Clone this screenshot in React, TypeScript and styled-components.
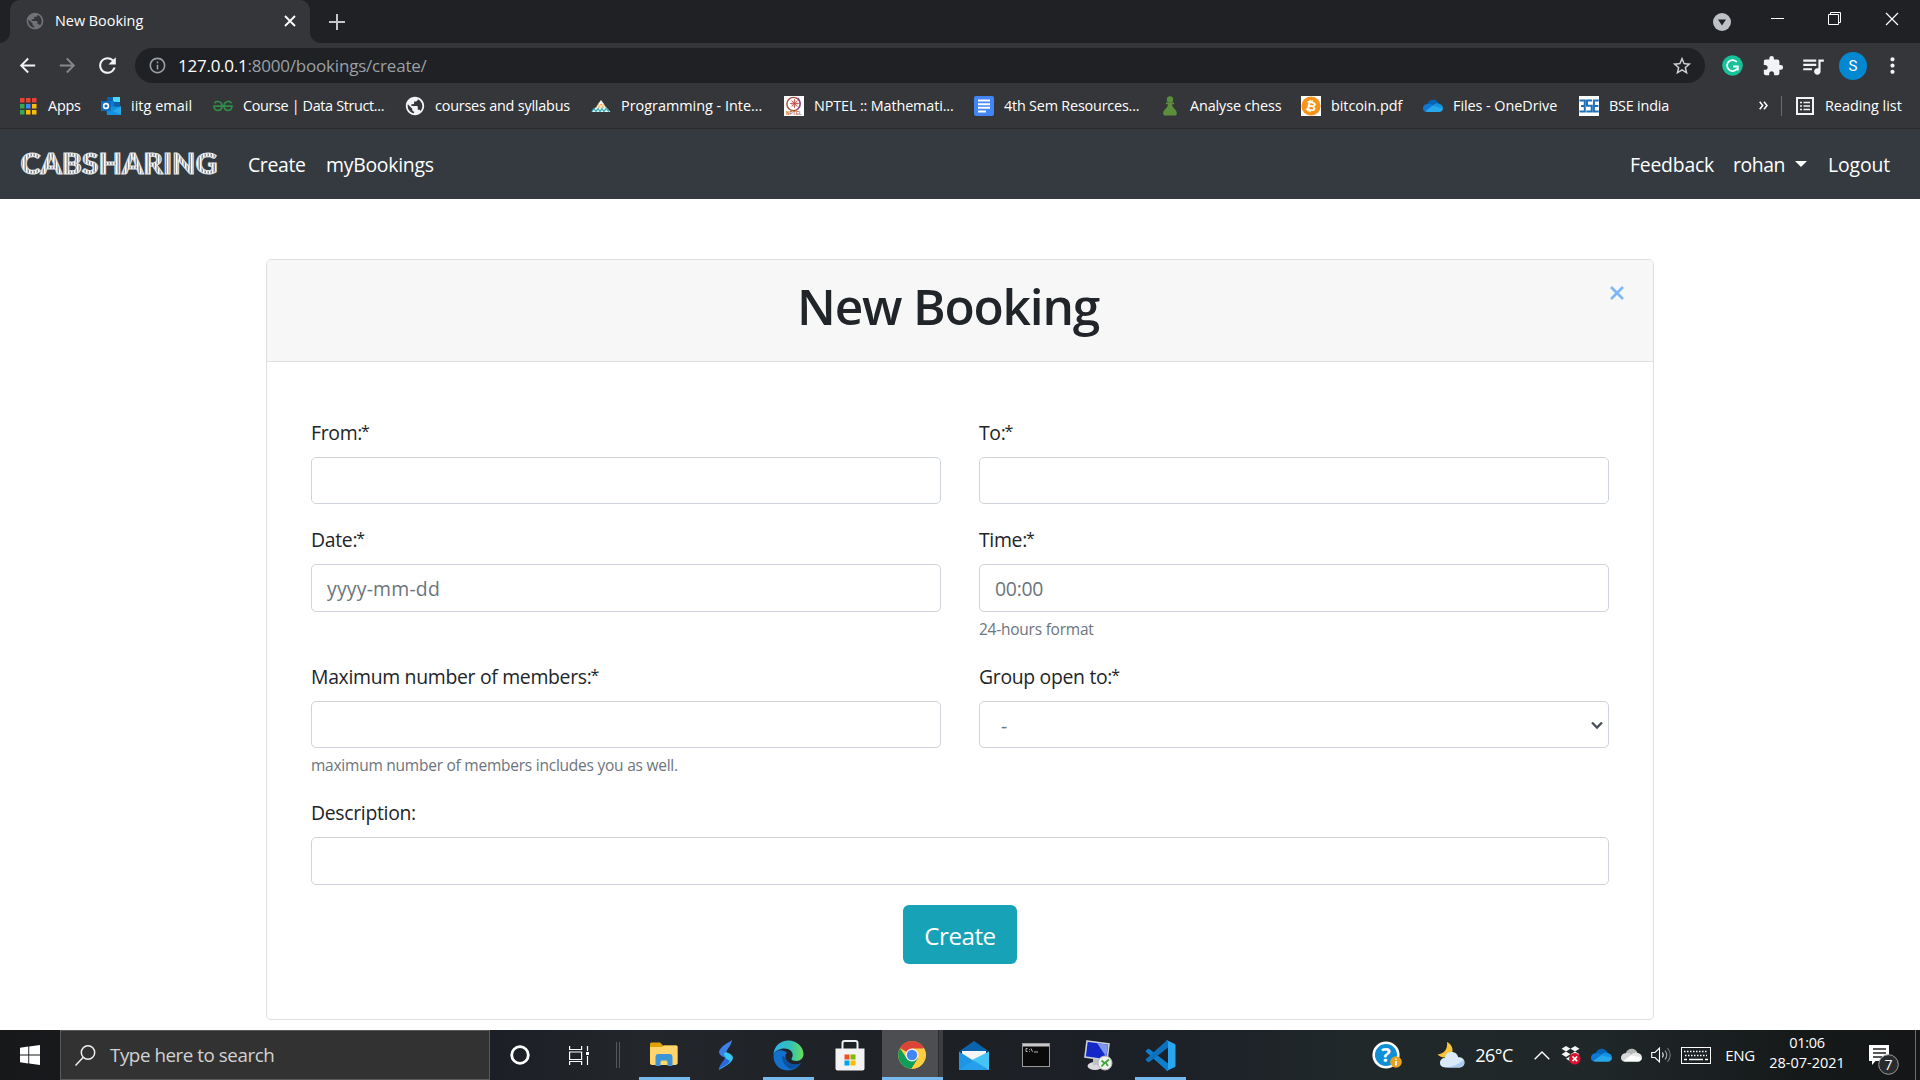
import React from "react";
import styled, { createGlobalStyle, css } from "styled-components";
import {
  MdArrowBack,
  MdArrowForward,
  MdExtension,
  MdInfoOutline,
  MdMoreVert,
  MdPublic,
  MdQueueMusic,
  MdRefresh,
  MdStarBorder,
} from "react-icons/md";

const ui = `"Segoe UI", "Open Sans", "Noto Sans", sans-serif`;

const GlobalStyle = createGlobalStyle`
  * { box-sizing: border-box; }
  body { margin: 0; background: #fff; font-family: ${ui}; overflow: hidden; }
  svg { display: block; flex: none; }
`;

const Screen = styled.div`
  width: 1920px;
  height: 1080px;
  display: flex;
  flex-direction: column;
  overflow: hidden;
`;

/* ---------- generic bits ---------- */

const Text = styled.span<{ $size: number; $track?: number; $color?: string; $w?: number }>`
  font-size: ${(p) => p.$size}px;
  letter-spacing: ${(p) => p.$track ?? 0}px;
  color: ${(p) => p.$color ?? "#fff"};
  ${(p) => p.$w && css`width: ${p.$w}px;`}
  white-space: nowrap;
  line-height: 1.36;
`;

const Cell = styled.div<{ $w: number }>`
  width: ${(p) => p.$w}px;
  flex: none;
  display: flex;
  align-items: center;
  justify-content: center;
`;

const Spacer = styled.div`
  flex: 1;
`;

/* ---------- browser chrome ---------- */

const TabStrip = styled.div`
  height: 43px;
  flex: none;
  display: flex;
  background: #202124;
  padding-left: 10px;
`;

const Tab = styled.div`
  width: 300px;
  display: flex;
  align-items: center;
  padding: 0 14px 2px 15px;
  background: #35363a;
  border-radius: 10px 10px 0 0;
  position: relative;
  &::before,
  &::after {
    content: "";
    position: absolute;
    bottom: 0;
    width: 10px;
    height: 10px;
  }
  &::before {
    left: -10px;
    background: radial-gradient(circle at 0 0, transparent 9.5px, #35363a 10px);
  }
  &::after {
    right: -10px;
    background: radial-gradient(circle at 100% 0, transparent 9.5px, #35363a 10px);
  }
`;

const TabTitle = styled(Text)`
  flex: 1;
  margin-left: 10px;
`;

const NewTab = styled(Cell)`
  height: 43px;
  margin-left: 9px;
`;

const WindowButtons = styled.div`
  display: flex;
  height: 37px;
  align-items: center;
`;

const Toolbar = styled.div`
  height: 45px;
  flex: none;
  display: flex;
  align-items: center;
  background: #35363a;
  padding: 0 0 0 7px;
`;

const AddressBar = styled.div`
  width: 1570px;
  height: 35px;
  margin-left: 8px;
  border-radius: 18px;
  background: #202124;
  display: flex;
  align-items: center;
  padding: 0 12px 0 13px;
`;

const Url = styled.div`
  display: flex;
  flex: 1;
  margin-left: 11px;
`;

const Avatar = styled.div`
  width: 28px;
  height: 28px;
  border-radius: 50%;
  background: #0288d1;
  color: #fff;
  font: 15px/28px Roboto, sans-serif;
  text-align: center;
`;

const BookmarksBar = styled.div`
  height: 41px;
  flex: none;
  display: flex;
  align-items: center;
  background: #35363a;
  border-bottom: 1px solid #29292c;
  padding: 0 0 5px 18px;
`;

const BookmarkItem = styled.div<{ $w: number }>`
  width: ${(p) => p.$w}px;
  flex: none;
  display: flex;
  align-items: center;
  gap: 10px;
`;

const IconSlot = styled.div`
  width: 20px;
  height: 20px;
  display: flex;
  align-items: center;
  justify-content: center;
`;

const Divider = styled.div`
  width: 1px;
  height: 20px;
  background: #6b6c6f;
`;

/* ---------- page ---------- */

const Navbar = styled.nav`
  height: 70px;
  flex: none;
  display: flex;
  align-items: center;
  background: #343a40;
  padding: 2px 30px 0 20px;
`;

const Caret = styled.div`
  margin: 0 21px 3px 12px;
  border: 6px solid transparent;
  border-top-color: #fff;
  border-bottom: 0;
`;

const Page = styled.main`
  height: 831px;
  flex: none;
  display: flex;
  justify-content: center;
  padding-top: 60px;
  background: #fff;
`;

const Card = styled.section`
  width: 1388px;
  height: 761px;
  border: 1px solid #dfdfdf;
  border-radius: 5px;
  background: #fff;
  overflow: hidden;
`;

const CardHeader = styled.header`
  height: 102px;
  display: flex;
  justify-content: space-between;
  background: #f7f7f7;
  border-bottom: 1px solid #dfdfdf;
  padding: 0 29px 0 530px;
`;

const Title = styled.h1`
  margin: 12px 0 0;
  font-size: 49.6px;
  font-weight: 600;
  line-height: 68px;
  letter-spacing: -1.2px;
  color: #212529;
  white-space: nowrap;
`;

const Close = styled.div`
  padding-top: 26px;
`;

const Form = styled.div`
  padding: 57px 44px 0;
`;

const FieldRow = styled.div<{ $h: number }>`
  display: flex;
  gap: 38px;
  height: ${(p) => p.$h}px;
`;

const Field = styled.div`
  flex: 1;
  display: flex;
  flex-direction: column;
`;

const Label = styled.label`
  height: 38px;
  line-height: 28px;
  font-size: 19.4px;
  letter-spacing: -0.31px;
  color: #212529;
`;

const Star = styled.span`
  font-size: 16px;
  line-height: 1;
  vertical-align: 3px;
  margin-left: -1px;
`;

const Control = styled.div<{ $h?: number; $pad?: number }>`
  height: ${(p) => p.$h ?? 48}px;
  display: flex;
  align-items: center;
  justify-content: space-between;
  padding: 2px 5px 0 ${(p) => p.$pad ?? 15}px;
  border: 1px solid #ced4da;
  border-radius: 5px;
  background: #fff;
  font-size: 19.4px;
  color: #6c757d;
`;

const Help = styled.small`
  margin-top: 5px;
  line-height: 24px;
  font-size: 15.5px;
  letter-spacing: -0.24px;
  color: #6c757d;
`;

const Submit = styled.button`
  display: block;
  width: 114px;
  height: 59px;
  margin: 20px auto 0;
  padding: 2px 0 0;
  border: 0;
  border-radius: 6px;
  background: #17a2b8;
  color: #fff;
  font-family: ${ui};
  font-size: 24.2px;
  letter-spacing: -0.5px;
`;

/* ---------- taskbar ---------- */

const Taskbar = styled.footer`
  height: 50px;
  flex: none;
  display: flex;
  align-items: stretch;
  background: linear-gradient(90deg, #17181a 0, #1c2026 500px, #23272b 640px, #1d2024 900px, #1c2027 1150px, #20282a 1350px, #1f2729 1600px, #16191a 1800px, #141617 100%);
`;

const SearchBox = styled.div`
  width: 430px;
  border: 1px solid #5a5a5a;
  background: #323232;
  display: flex;
  align-items: center;
  padding: 1px 0 0 14px;
  gap: 14px;
`;

const Grip = styled.div`
  width: 4px;
  height: 26px;
  margin: 12px 13px 0 8px;
  border: solid #55595c;
  border-width: 0 1px;
`;

const AppButton = styled.div<{ $open?: boolean; $active?: boolean }>`
  width: 62px;
  display: flex;
  align-items: center;
  justify-content: center;
  ${(p) =>
    p.$open &&
    css`
      background: linear-gradient(#76b9ed, #76b9ed) center bottom / 51px 3px no-repeat;
    `}
  ${(p) =>
    p.$active &&
    css`
      background: linear-gradient(#76b9ed, #76b9ed) 1px bottom / 61px 3px no-repeat,
        linear-gradient(90deg, transparent 1px, #4c4e51 1px, #4c4e51 57px, #2c2e31 57px, #2c2e31 58px, #3b3d40 58px);
    `}
`;

const Clock = styled.div`
  width: 84px;
  display: flex;
  flex-direction: column;
  align-items: center;
  padding: 3px 8px 0 0;
`;

const Notifications = styled(Cell)`
  padding-top: 8px;
`;

const ShowDesktop = styled.div`
  width: 5px;
  border-left: 1px solid #6b6d6e;
`;

/* ---------- drawings ---------- */

const Logo = () => (
  <svg width="200" height="40" viewBox="0 0 200 40" overflow="visible">
    <defs>
      <pattern id="logoStripes" width="3" height="4" patternUnits="userSpaceOnUse">
        <rect width="3" height="4" fill="#858b92" />
        <rect width="1.5" height="4" fill="#ffffff" />
      </pattern>
    </defs>
    <text
      x="0.500"
      y="28.800"
      fontFamily="Lato, sans-serif"
      fontWeight="900"
      fontSize="28"
      textLength="197"
      lengthAdjust="spacingAndGlyphs"
      fill="url(#logoStripes)"
      stroke="#dfe1e3"
      strokeWidth="1.100"
    >
      CABSHARING
    </text>
  </svg>
);

const AppsGrid = () => {
  const colors = ["#ea4335", "#ea4335", "#ea4335", "#34a853", "#4285f4", "#fbbc05", "#34a853", "#fbbc05", "#fbbc05"];
  return (
    <svg width="18" height="18">
      {colors.map((c, i) => (
        <rect key={i} x={(i % 3) * 6 + 1} y={Math.floor(i / 3) * 6 + 1} width="4.500" height="4.500" fill={c} />
      ))}
    </svg>
  );
};

const OutlookIcon = () => (
  <svg width="20" height="18" viewBox="0 0 20 18">
    <rect x="6" y="0" width="13" height="11" fill="#0a5fb0" />
    <rect x="12" y="0" width="7" height="5" fill="#50d9ff" />
    <rect x="6" y="4" width="7" height="6" fill="#0f78d4" />
    <path d="M5 9l15 1v8H6z" fill="#1490df" />
    <path d="M20 9v9L12 14z" fill="#28a8ea" />
    <rect x="0" y="4" width="10" height="10" fill="#0f6cbd" />
    <circle cx="5" cy="9" r="2.4" fill="none" stroke="#fff" strokeWidth="1.6" />
  </svg>
);

const GfgIcon = () => (
  <svg width="20" height="12" viewBox="0 0 20 12" fill="none" stroke="#2f8d46" strokeWidth="1.7">
    <path d="M1.5 3.2C2.6 1.6 4 1.3 5.3 1.5c2.3.4 3.7 2.3 3.7 4.6C8.900 8.700 7.400 10.400 5 10.400 2.600 10.400 1.200 8.800 1 6.200H19C18.800 8.800 17.400 10.400 15 10.400c-2.400 0-3.900-1.700-4-4.300 0-2.300 1.400-4.200 3.700-4.600 1.300-.2 2.700.1 3.800 1.700" />
  </svg>
);

const PyramidIcon = () => (
  <svg width="20" height="12" viewBox="0 0 20 12">
    <path d="M10 0l3 4H7z" fill="#f4f1e8" />
    <path d="M7 4h6l2.500 4h-11z" fill="#f2b35e" />
    <path d="M8 4l2 3 2-3M6 8l1.500-3M14 8l-1.500-3" stroke="#fff" strokeWidth=".9" fill="none" />
    <path d="M4.500 7.500h11L19.500 12h-19z" fill="#dff3f1" />
    <path d="M1 11.500l2-3 2 3 2-3 2 3 2-3 2 3 2-3 3 3" stroke="#35a9b5" strokeWidth="1.200" fill="none" />
  </svg>
);

const NptelIcon = () => (
  <svg width="20" height="20" viewBox="0 0 20 20">
    <rect width="20" height="20" fill="#fff" />
    <circle cx="9.500" cy="8" r="6.600" fill="none" stroke="#a8503f" strokeWidth="1.400" />
    <circle cx="10.500" cy="7.500" r="3.500" fill="#f0c6c0" />
    <path d="M10.500 3v9M6 7.500h9M7.500 4.500l6 6M13.500 4.500l-6 6" stroke="#b0413e" strokeWidth=".7" />
    <path d="M14 2c3 3 3 8 0 11" stroke="#8a4a9a" strokeWidth="1.200" fill="none" />
    <text x="2" y="19.300" fontSize="4.800" fontWeight="700" fontFamily="Liberation Sans, sans-serif" fill="#c0712b" textLength="16">NPTEL</text>
  </svg>
);

const DocsIcon = () => (
  <svg width="20" height="20" viewBox="0 0 20 20">
    <rect width="20" height="20" rx="2" fill="#4285f4" />
    <path d="M4 4.500h12M4 8.200h12M4 11.800h12M4 15.500h8" stroke="#fff" strokeWidth="1.900" />
  </svg>
);

const PawnIcon = () => (
  <svg width="20" height="20" viewBox="0 0 20 20" fill="#5b8f3c">
    <circle cx="10" cy="3.400" r="3.200" />
    <path d="M6 6.500h8v1.700h-2c0 4 4.800 5 4.800 9.300 0 1.500-1 2-2 2H5.200c-1 0-2-.5-2-2C3.200 13.200 8 12.200 8 8.200H6z" />
  </svg>
);

const BitcoinIcon = () => (
  <svg width="20" height="20" viewBox="0 0 20 20">
    <rect width="20" height="20" fill="#fff" />
    <circle cx="10" cy="10" r="9.600" fill="#f7931a" />
    <text x="10.200" y="14.600" transform="rotate(12 10 10)" textAnchor="middle" fontFamily="DejaVu Sans, sans-serif" fontWeight="700" fontSize="13" fill="#fff">₿</text>
  </svg>
);

const CloudIcon = ({ gray, w = 20 }: { gray?: boolean; w?: number }) => (
  <svg width={w} height={w * 0.65} viewBox="0 0 20 13">
    <path d="M4.500 5C5.500 1.500 9 0 12 1c2 .7 3 2 3.500 3.500L9 9z" fill={gray ? "#b5b5b5" : "#0364b8"} />
    <path d="M4.500 5c2-.5 3.500 0 5 1l4 3L3.500 13C.500 12.500 0 10.500 0 9.200 0 7 2 5 4.500 5z" fill={gray ? "#d8d8d8" : "#0f78d4"} />
    <path d="M9.500 7c1.500-2.500 4-3 6-2.500C18.500 5 20 7 20 9l-5 3z" fill={gray ? "#e6e6e6" : "#1490df"} />
    <path d="M9.500 6.800L2.500 12.200c.500.500 1.200.8 2 .8H16c2.200 0 4-1.600 4-3.800z" fill={gray ? "#fff" : "#28a8ea"} />
  </svg>
);

const BseIcon = () => (
  <svg width="20" height="20" viewBox="0 0 20 20">
    <rect width="20" height="20" fill="#fff" />
    <path d="M.5 4.500h5.300v4.700L4.500 10l1.300.8v4.700H.5M2 10h3M13 4.500H8v5.300h4.700v5.700H7.300M19.800 4.500H14.900v11h4.900M14.900 10h4.500" fill="none" stroke="#1f72b8" strokeWidth="2" />
  </svg>
);

const ListIcon = () => (
  <svg width="18" height="18" viewBox="0 0 18 18" fill="none" stroke="#f1f3f4">
    <rect x="1" y="1" width="16" height="16" strokeWidth="2" />
    <path d="M4 5.500h2M4 9h2M4 12.500h2M7.500 5.500H14M7.500 9H14M7.500 12.500H14" strokeWidth="1.600" />
  </svg>
);

const GrammarlyIcon = () => (
  <svg width="21" height="21" viewBox="0 0 21 21">
    <circle cx="10.500" cy="10.500" r="10.300" fill="#15c39a" />
    <path d="M14.800 7A5.500 5.500 0 1 0 15 13.800M11 11.500h4.800v4" fill="none" stroke="#fff" strokeWidth="1.800" />
  </svg>
);

const Cross = ({ size, color, w }: { size: number; color: string; w: number }) => (
  <svg width={size} height={size} viewBox={`0 0 ${size} ${size}`}>
    <path d={`M1 1L${size - 1} ${size - 1}M${size - 1} 1L1 ${size - 1}`} stroke={color} strokeWidth={w} />
  </svg>
);

const ExplorerIcon = () => (
  <svg width="28" height="26" viewBox="0 0 28 26">
    <path d="M0 2q0-1.500 1.500-1.500H10l3 3H26q1.500 0 1.500 1.500V22H0z" fill="#e0a106" />
    <path d="M0 5h12l2-1.500h12.500q1 0 1 1V21q0 2-2 2H2q-2 0-2-2z" fill="#fed66b" />
    <path d="M5.500 24v-9q0-3 3-3h11q3 0 3 3v9h-5v-4q0-1.500-1.500-1.500h-4q-1.500 0-1.500 1.500v4z" fill="#3b93d8" />
  </svg>
);

const SIcon = () => (
  <svg width="16" height="30" viewBox="0 0 16 30">
    <path d="M14 0C12 2 2 6 1 12c0 3 4 5 7 6 2-2 1-3 0-4 0-5 5-7 6-14z" fill="#3f7fe8" />
    <path d="M1 30c2-2 13-6 14-12 0-3-4-5-7-6-3 2-2 3-1 4 2 5-5 7-6 14z" fill="#35c8f0" />
    <path d="M1 30c1-7 5-9 6-12l5 3C9 26 4 26 1 30z" fill="#2c66d8" />
  </svg>
);

const EdgeIcon = () => (
  <svg width="31" height="31" viewBox="0 0 31 31">
    <defs>
      <linearGradient id="edgeTop" x1="0" x2="1">
        <stop offset="0" stopColor="#2bb3ee" />
        <stop offset=".6" stopColor="#35c1b5" />
        <stop offset="1" stopColor="#6be052" />
      </linearGradient>
    </defs>
    <path d="M.500 15C0 22 5 30.500 14.500 30.500c6 0 11-3 13.500-7.500-6 3.500-14 1-15.500-5.500C12 14 14 13 14 13 11 9 2 9 .500 15z" fill="#1271cc" />
    <path d="M9 16c0 6 4 12 10 13 4-1 7-3 9-6-6 3.500-14 1-15.500-5.500z" fill="#0c4f9e" />
    <path d="M.500 14.500C1 6 7.500.5 15.500.5 24 .500 30.500 7 30.500 14c0 4-3 7-7 7-3 0-5-1-5-2s1.200-1.500 1.200-4c0-3.500-3-6.500-8-6.500S1.500 11 .500 14.500z" fill="url(#edgeTop)" />
  </svg>
);

const StoreIcon = () => (
  <svg width="30" height="31" viewBox="0 0 30 31">
    <path d="M7.500 10V3q0-2 2-2h11q2 0 2 2v7" fill="none" stroke="#f0f0f0" strokeWidth="2" />
    <path d="M.500 8.500h29v20q0 2-2 2h-25q-2 0-2-2z" fill="#f3f3f3" />
    <rect x="9.500" y="14.500" width="5" height="5" fill="#f25022" />
    <rect x="15.500" y="14.500" width="5" height="5" fill="#7fba00" />
    <rect x="9.500" y="20.500" width="5" height="5" fill="#00a4ef" />
    <rect x="15.500" y="20.500" width="5" height="5" fill="#ffb900" />
  </svg>
);

const ChromeIcon = () => (
  <svg width="28" height="28" viewBox="0 0 28 28">
    <circle cx="14" cy="14" r="13.800" fill="#fc4" />
    <path d="M14 14L2 7A13.800 13.800 0 0 1 26 7z" fill="#db4437" />
    <path d="M2 7.200A13.800 13.800 0 0 0 13.500 27.800L20 17.500 14 14 8.500 17z" fill="#0f9d58" />
    <path d="M14 7.500h12.200A13.800 13.800 0 0 1 13.500 27.800L20 17.500z" fill="#ffcd40" />
    <circle cx="14" cy="14" r="6.500" fill="#f4f4f4" />
    <circle cx="14" cy="14" r="5.200" fill="#4285f4" />
  </svg>
);

const MailIcon = () => (
  <svg width="30" height="29" viewBox="0 0 30 29">
    <path d="M0 10.500L15 0l15 10.500z" fill="#0a64ad" />
    <path d="M3 10h24v10H3z" fill="#f5f5f5" />
    <path d="M0 10.500L15 20 30 10.500V29H0z" fill="#1f95e6" />
    <path d="M30 10.500V29L13 19z" fill="#45c5f5" />
    <path d="M0 29h30L15 19z" fill="#2ca7ee" opacity=".6" />
  </svg>
);

const CmdIcon = () => (
  <svg width="28" height="24" viewBox="0 0 28 24">
    <rect x=".5" y=".5" width="27" height="23" fill="#0a0a0a" stroke="#9b9b9b" />
    <path d="M1 1h26v2.500H1z" fill="#c8c8c8" />
    <path d="M5.500 5.500H4v3h1.500M7.500 6v.8M7.500 8v.8M9 5.500l1.500 3.300M12 9h4" stroke="#c8c8c8" strokeWidth=".9" fill="none" />
  </svg>
);

const RemoteIcon = () => (
  <svg width="30" height="31" viewBox="0 0 30 31">
    <path d="M4 1l22 3-2 16L2 17z" fill="#1428c8" stroke="#c9d0dc" strokeWidth="1.600" />
    <path d="M14 3l11 1.700-1.800 12z" fill="#7f98ee" />
    <ellipse cx="12" cy="26" rx="7.500" ry="4" fill="#d9dadb" />
    <path d="M10 19h6v6h-6z" fill="#bfc2c5" />
    <circle cx="22" cy="23" r="7" fill="#f0f0ee" stroke="#b5b8b5" />
    <path d="M18.500 20.500l3 2.500-3 3.500M26 19.500l-3.500 3 2.500 3.500" fill="none" stroke="#3fa535" strokeWidth="1.800" />
  </svg>
);

const VsCodeIcon = () => (
  <svg width="31" height="31" viewBox="0 0 31 31">
    <path d="M1 10.500L3 9q.7-.4 1.400.1L23 23.500V30.500q-1 .3-1.800-.5L1 12q-.6-.7 0-1.500z" fill="#0f7fcb" />
    <path d="M1 20.500L3 22q.7.400 1.400-.1L23 7.500V.500q-1-.3-1.800.5L1 19q-.6.700 0 1.500z" fill="#0c72bd" />
    <path d="M22.500.400L29.500 3.700q1 .5 1 1.600v20.400q0 1.100-1 1.600l-7 3.300q-1.500.3-1.800-.7 2.300 1 2.300-1.400V2.500q0-2.300-2.300-1.400.6-1 1.800-.7z" fill="#2aa5f0" />
  </svg>
);

const HelpIcon = () => (
  <svg width="30" height="29" viewBox="0 0 30 29">
    <circle cx="14" cy="14" r="12.300" fill="#0f8fd6" stroke="#fff" strokeWidth="2.600" />
    <text x="14" y="21" textAnchor="middle" fontFamily="Open Sans, sans-serif" fontWeight="700" fontSize="20" fill="#fff">?</text>
    <circle cx="24" cy="21" r="5.800" fill="#e8a21c" />
    <path d="M24 17.500v1.200M24 20v4.500" stroke="#fff" strokeWidth="1.700" />
  </svg>
);

const WeatherIcon = () => (
  <svg width="28" height="26" viewBox="0 0 28 26">
    <path d="M10 0c5 2.500 7 8 4.500 12C12 16 5 17 .5 12.500 7 12 11 7 10 0z" fill="#f8c53a" />
    <path d="M8.500 25.500C5 25.500 3 23.500 3 20.800S5 16 8 16c.5-4 3-6 6.500-6 3.800 0 6 2.200 6.800 5.300 4 0 6.200 2 6.200 5.200s-2.500 5-5.500 5z" fill="#d9ebfb" />
    <path d="M8.500 25.500c6-.5 14-3 18-8 2 4.500-.5 8-4.500 8z" fill="#a9cdf2" />
  </svg>
);

const DropboxIcon = () => (
  <svg width="20" height="20" viewBox="0 0 20 20">
    <path d="M5 1l4.500 2.700L5 6.400.5 3.700zM14 1l4.500 2.700L14 6.400 9.500 3.700zM5 6.500l4.500 2.700L5 12 .5 9.200zM14 6.500l4.500 2.700L14 12 9.500 9.200zM9.500 11l4.500 2.700-4.500 2.800L5 13.700z" fill="#f4f4f4" />
    <circle cx="13.800" cy="13.800" r="5.800" fill="#d9102f" />
    <path d="M11.500 11.500l4.600 4.600M16.100 11.500l-4.600 4.600" stroke="#fff" strokeWidth="1.700" />
  </svg>
);

const SpeakerIcon = () => (
  <svg width="21" height="18" viewBox="0 0 21 18" fill="none" stroke="#fff" strokeWidth="1.100">
    <path d="M.7 6.500H4L8.500 2v14L4 11.500H.7z" />
    <path d="M11.500 6.500q1.500 2.500 0 5" />
    <path d="M14 4.500q3.500 4.500 0 9" stroke="#a4a6a7" />
    <path d="M16.500 2q5.500 7 0 14" stroke="#77797a" />
  </svg>
);

const KeyboardIcon = () => (
  <svg width="30" height="17" viewBox="0 0 30 17" fill="none" stroke="#fff">
    <rect x=".5" y=".5" width="29" height="16" />
    <path d="M3 4.500h24M4 8.500h22" strokeDasharray="1.500 1.500" strokeWidth="1.500" />
    <path d="M3 12.500h3M8 12.500h14M24 12.500h3" strokeWidth="1.300" />
  </svg>
);

const NoticeIcon = () => (
  <svg width="32" height="34" viewBox="0 0 32 34">
    <path d="M1 3h20v16H7.500L4 23v-4H1z" fill="#fff" />
    <path d="M5 7h13M5 11h13M5 15h9" stroke="#222" strokeWidth="1.300" />
    <circle cx="20.500" cy="22.500" r="9.800" fill="#2a2b2c" stroke="#9a9b9b" />
    <text x="20.500" y="27.700" textAnchor="middle" fontFamily="Open Sans, sans-serif" fontSize="14" fill="#fff">7</text>
  </svg>
);

const bookmarks: { label: string; w: number; icon: React.ReactNode; track?: number }[] = [
  { label: "Apps", w: 83, icon: <AppsGrid /> },
  { label: "iitg email", w: 112, icon: <OutlookIcon />, track: 0.05 },
  { label: "Course | Data Struct...", w: 192, icon: <GfgIcon />, track: -0.35 },
  { label: "courses and syllabus", w: 186, icon: <MdPublic size={22} color="#f1f3f4" /> },
  { label: "Programming - Inte...", w: 193, icon: <PyramidIcon />, track: 0 },
  { label: "NPTEL :: Mathemati...", w: 190, icon: <NptelIcon />, track: -0.13 },
  { label: "4th Sem Resources...", w: 186, icon: <DocsIcon /> },
  { label: "Analyse chess", w: 141, icon: <PawnIcon />, track: -0.12 },
  { label: "bitcoin.pdf", w: 122, icon: <BitcoinIcon />, track: -0.05 },
  { label: "Files - OneDrive", w: 156, icon: <CloudIcon />, track: -0.05 },
  { label: "BSE india", w: 120, icon: <BseIcon /> },
];

export default function App() {
  return (
    <Screen>
      <GlobalStyle />
      <TabStrip>
        <Tab>
          <MdPublic size={20} color="#6f7276" />
          <TabTitle $size={14.4} $track={0}>New Booking</TabTitle>
          <Cross size={12} color="#fff" w={1.8} />
        </Tab>
        <NewTab $w={36}>
          <svg width="16" height="16"><path d="M8 0v16M0 8h16" stroke="#c4c6ca" strokeWidth="2" /></svg>
        </NewTab>
        <Spacer />
        <Cell $w={40}>
          <svg width="18" height="18"><circle cx="9" cy="9" r="9" fill="#bdc1c6" /><path d="M5 6.500h8l-4 6z" fill="#202124" /></svg>
        </Cell>
        <WindowButtons>
          <Cell $w={71}><svg width="13" height="13"><path d="M0 6.500h13" stroke="#fff" /></svg></Cell>
          <Cell $w={42}>
            <svg width="13" height="13" fill="none" stroke="#fff"><path d="M.5 2.500h10v10H.500zM2.500 2.500v-2h10v10h-2" /></svg>
          </Cell>
          <Cell $w={8} />
          <Cell $w={57}><Cross size={14} color="#fff" w={1.2} /></Cell>
        </WindowButtons>
      </TabStrip>

      <Toolbar>
        <Cell $w={40}><MdArrowBack size={23} color="#f1f3f4" /></Cell>
        <Cell $w={40}><MdArrowForward size={23} color="#85878a" /></Cell>
        <Cell $w={40}><MdRefresh size={25} color="#f1f3f4" /></Cell>
        <AddressBar>
          <MdInfoOutline size={19} color="#9aa0a6" />
          <Url>
            <Text $size={17} $track={-0.25}>127.0.0.1</Text>
            <Text $size={17} $track={-0.2} $color="#9aa0a6">:8000/bookings/create/</Text>
          </Url>
          <MdStarBorder size={22} color="#d0d2d5" />
        </AddressBar>
        <Cell $w={54}><GrammarlyIcon /></Cell>
        <Cell $w={27}><MdExtension size={22} color="#f1f3f4" /></Cell>
        <Cell $w={53}><MdQueueMusic size={26} color="#f1f3f4" /></Cell>
        <Cell $w={28}><Avatar>S</Avatar></Cell>
        <Cell $w={51}><MdMoreVert size={25} color="#f1f3f4" /></Cell>
      </Toolbar>

      <BookmarksBar>
        {bookmarks.map((b) => (
          <BookmarkItem key={b.label} $w={b.w}>
            <IconSlot>{b.icon}</IconSlot>
            <Text $size={14.4} $track={b.track ?? -0.2}>{b.label}</Text>
          </BookmarkItem>
        ))}
        <Cell $w={82}>
          <Spacer />
          <svg width="9" height="9" viewBox="0 0 9 9" fill="none" stroke="#fff" strokeWidth="1.500"><path d="M.7.700l3 3.800-3 3.800M5 .700l3 3.800-3 3.800" /></svg>
          <Cell $w={13} />
        </Cell>
        <Divider />
        <Cell $w={3} />
        <Cell $w={40}><ListIcon /></Cell>
        <Text $size={14.4} $track={-0.02}>Reading list</Text>
      </BookmarksBar>

      <Navbar>
        <Logo />
        <Cell $w={28} />
        <Text $size={19.4} $track={-0.35} $w={78}>Create</Text>
        <Text $size={19.4} $track={-0.25}>myBookings</Text>
        <Spacer />
        <Text $size={19.4} $track={-0.22} $w={103}>Feedback</Text>
        <Text $size={19.4} $track={-0.45} $w={50}>rohan</Text>
        <Caret />
        <Text $size={19.4} $track={-0.1} $w={62}>Logout</Text>
      </Navbar>

      <Page>
        <Card>
          <CardHeader>
            <Title>New Booking</Title>
            <Close><Cross size={14} color="#7ab8fb" w={2.600} /></Close>
          </CardHeader>
          <Form>
            <FieldRow $h={107}>
              <Field><Label>From:<Star>*</Star></Label><Control $h={47} /></Field>
              <Field><Label>To:<Star>*</Star></Label><Control $h={47} /></Field>
            </FieldRow>
            <FieldRow $h={137}>
              <Field><Label>Date:<Star>*</Star></Label><Control><Text $size={19.4} $track={0.2} $color="inherit">yyyy-mm-dd</Text></Control></Field>
              <Field><Label>Time:<Star>*</Star></Label><Control><Text $size={19.4} $track={-0.25} $color="inherit">00:00</Text></Control><Help>24-hours format</Help></Field>
            </FieldRow>
            <FieldRow $h={136}>
              <Field>
                <Label>Maximum number of members:<Star>*</Star></Label>
                <Control $h={47} />
                <Help>maximum number of members includes you as well.</Help>
              </Field>
              <Field>
                <Label>Group open to:<Star>*</Star></Label>
                <Control $h={47} $pad={21}>
                  <span>-</span>
                  <svg width="12" height="9" viewBox="0 0 12 9"><path d="M1 1.500l5 5 5-5" fill="none" stroke="#495057" strokeWidth="2.300" /></svg>
                </Control>
              </Field>
            </FieldRow>
            <FieldRow $h={86}>
              <Field><Label>Description:</Label><Control /></Field>
            </FieldRow>
            <Submit>Create</Submit>
          </Form>
        </Card>
      </Page>

      <Taskbar>
        <Cell $w={60}>
          <svg width="20" height="20" viewBox="0 0 20 20" fill="#fff"><path d="M0 2.700L8.300 1.600v7.900H0zM9.200 1.400L20 0v9.500H9.200zM0 10.400h8.300v8L0 17.300zM9.200 10.400H20V20L9.200 18.500z" /></svg>
        </Cell>
        <SearchBox>
          <svg width="21" height="21" viewBox="0 0 21 21" fill="none" stroke="#f0f0f0" strokeWidth="1.500"><circle cx="13" cy="7.500" r="6.700" /><path d="M8.300 12.300L.500 20.500" /></svg>
          <Text $size={18.800} $track={-0.45} $color="#d2d2d2">Type here to search</Text>
        </SearchBox>
        <Cell $w={60}>
          <svg width="20" height="20"><circle cx="10" cy="10" r="8.300" fill="none" stroke="#fff" strokeWidth="2.800" /></svg>
        </Cell>
        <Cell $w={58}>
          <svg width="21" height="19" viewBox="0 0 21 19" fill="none" stroke="#fff" strokeWidth="1.200"><path d="M.600 0v3.500h12V0M.600 6h12v7.500h-12zM.600 19v-3.500h12V19M18.500 0v5M18.500 10v9" /><rect x="17" y="6" width="3" height="3" fill="#fff" stroke="none" /></svg>
        </Cell>
        <Grip />
        <AppButton $open><ExplorerIcon /></AppButton>
        <AppButton><SIcon /></AppButton>
        <AppButton $open><EdgeIcon /></AppButton>
        <AppButton><StoreIcon /></AppButton>
        <AppButton $active><ChromeIcon /></AppButton>
        <AppButton><MailIcon /></AppButton>
        <AppButton><CmdIcon /></AppButton>
        <AppButton><RemoteIcon /></AppButton>
        <AppButton $open><VsCodeIcon /></AppButton>
        <Spacer />
        <Cell $w={74}><HelpIcon /></Cell>
        <Cell $w={53}><WeatherIcon /></Cell>
        <Cell $w={34}><Text $size={18} $track={-0.5}>26°C</Text></Cell>
        <Cell $w={11} />
        <Cell $w={39}>
          <svg width="16" height="9" viewBox="0 0 16 9"><path d="M.7 8.300L8 1l7.300 7.300" fill="none" stroke="#fff" strokeWidth="1.400" /></svg>
        </Cell>
        <Cell $w={20}><DropboxIcon /></Cell>
        <Cell $w={40}><CloudIcon w={21} /></Cell>
        <Cell $w={20}><CloudIcon gray w={21} /></Cell>
        <Cell $w={40}><SpeakerIcon /></Cell>
        <Cell $w={30}><KeyboardIcon /></Cell>
        <Cell $w={58}><Text $size={15} $track={-0.4}>ENG</Text></Cell>
        <Clock>
          <Text $size={14.500} $track={-0.3}>01:06</Text>
          <Text $size={14.500} $track={0}>28-07-2021</Text>
        </Clock>
        <Notifications $w={62}><NoticeIcon /></Notifications>
        <ShowDesktop />
      </Taskbar>
    </Screen>
  );
}
